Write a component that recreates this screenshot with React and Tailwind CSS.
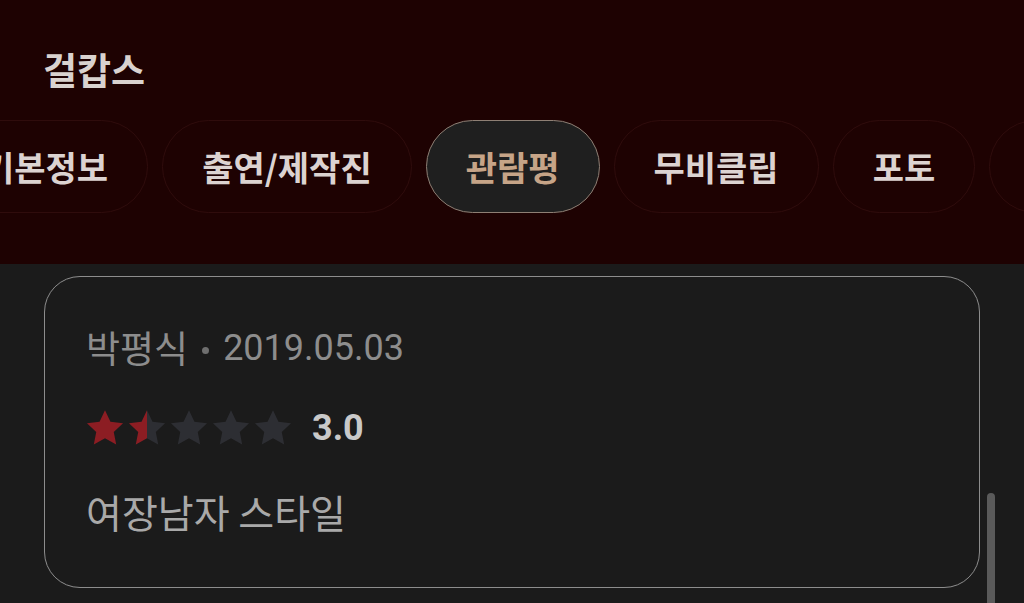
import { useState } from 'react';

const tabs = ['기본정보', '출연/제작진', '관람평', '무비클립', '포토', '예고편'];

function Star({ fill }) {
  // fill: 1 = full red, 0.5 = half red, 0 = gray
  const id = `half-${Math.random().toString(36).slice(2, 8)}`;
  const d = 'M12 1.8l3.1 6.6 7.2.9-5.3 5 1.4 7.1L12 17.9l-6.4 3.5 1.4-7.1-5.3-5 7.2-.9z';
  return (
    <svg viewBox="0 0 24 24" className="w-[42px] h-[42px] -mx-[2px]">
      <defs>
        <linearGradient id={id} x1="0" x2="1" y1="0" y2="0">
          <stop offset="0.5" stopColor="#8c1d23" />
          <stop offset="0.5" stopColor="#2d2e33" />
        </linearGradient>
      </defs>
      <path d={d} fill={fill === 1 ? '#8c1d23' : fill === 0.5 ? `url(#${id})` : '#2d2e33'} />
    </svg>
  );
}

export default function App() {
  const [active, setActive] = useState(2);
  const kr = { fontFamily: '"Noto Sans CJK KR", "Noto Sans", sans-serif' };
  const num = { fontFamily: 'Roboto, "Noto Sans", sans-serif' };

  return (
    <div className="w-[1024px] h-[603px] overflow-hidden bg-[#1b1b1b] relative" style={kr}>
      {/* header */}
      <div className="bg-[#1e0202] h-[264px] pt-[46px] overflow-hidden">
        <h1 className="px-[43px] text-[37px] leading-[46px] font-bold text-[#d9d2cf] m-0">걸캅스</h1>
        <div className="flex gap-[14px] mt-[28px] -ml-[57px] whitespace-nowrap">
          {tabs.map((t, i) => (
            <button
              key={t}
              type="button"
              onClick={() => setActive(i)}
              className={
                'h-[93px] px-[39px] rounded-full text-[34px] font-bold shrink-0 border-[1.5px] ' +
                (i === active
                  ? 'bg-[#1f1f1f] border-[#8e7f74] text-[#c6a487]'
                  : 'bg-transparent border-[#2f0c0c] text-[#dcd3d1]')
              }
            >
              {t}
            </button>
          ))}
        </div>
      </div>

      {/* review card */}
      <div className="mx-[44px] mt-[12px] w-[936px] h-[312px] rounded-[36px] border-[1.5px] border-[#8d8d8d] pt-[49px] pl-[41px]">
        <div className="flex items-center h-[44px] text-[#8d8d8d]">
          <span className="text-[37px]">박평식</span>
          <span className="w-[7px] h-[7px] rounded-full bg-[#6f6f6f] mx-[14px] mt-[4px]" />
          <span className="text-[36px]" style={num}>2019.05.03</span>
        </div>
        <div className="flex items-center h-[42px] mt-[37px]">
          <div className="flex gap-[4px]">
            <Star fill={1} />
            <Star fill={0.5} />
            <Star fill={0} />
            <Star fill={0} />
            <Star fill={0} />
          </div>
          <span className="ml-[20px] text-[36px] font-bold text-[#c9c9c9]" style={num}>
            3.0
          </span>
        </div>
        <p className="mt-[36px] m-0 text-[39px] leading-[52px] text-[#a9a9a9]">여장남자 스타일</p>
      </div>

      {/* scrollbar */}
      <div className="absolute left-[987px] top-[493px] w-[8px] h-[130px] rounded-full bg-[#5a5a5a]" />
    </div>
  );
}
